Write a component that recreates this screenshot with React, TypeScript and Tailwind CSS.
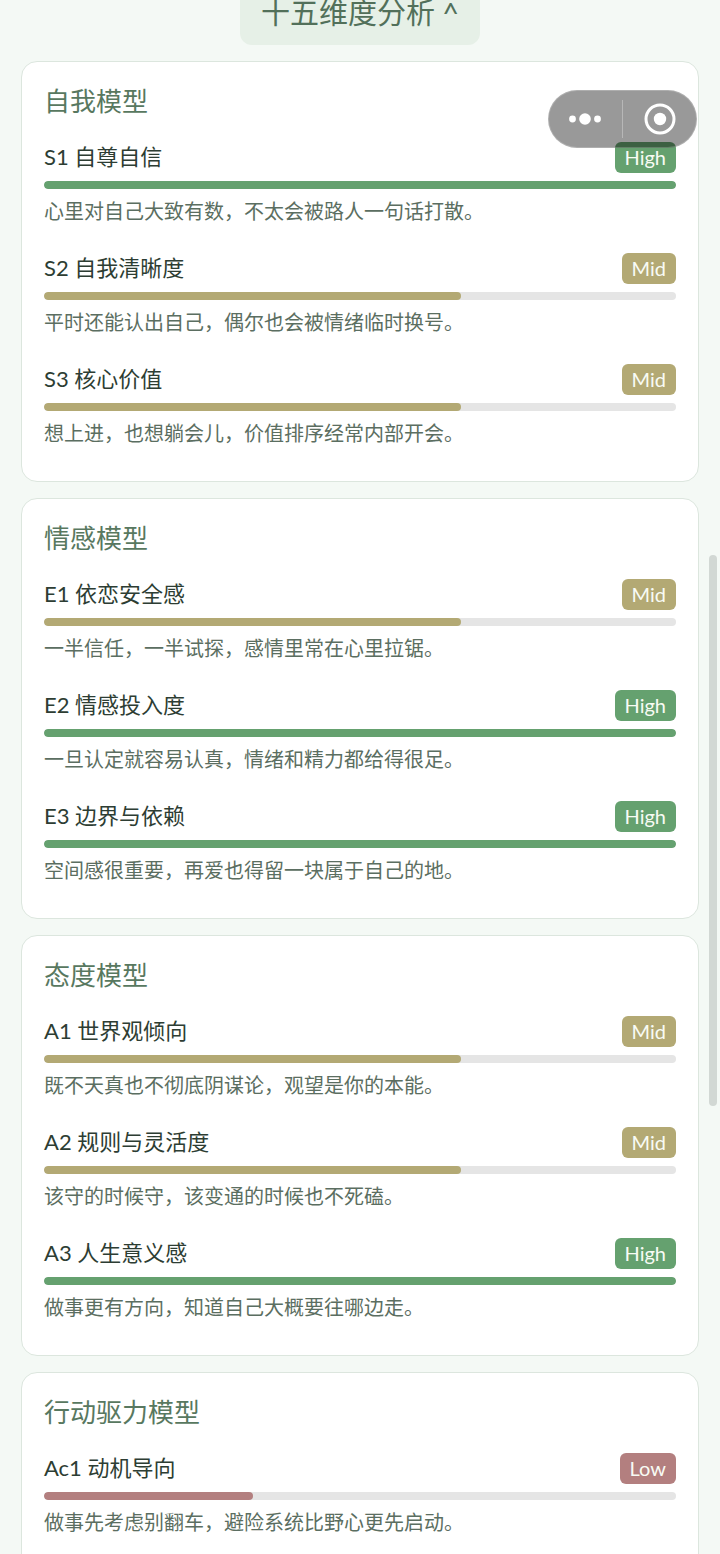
import React from "react"
import clsx from "clsx"

type Level = "High" | "Mid" | "Low"

type Dimension = {
  name: string
  level: Level
  description: string
}

type Model = {
  title: string
  dimensions: Dimension[]
}

const models: Model[] = [
  {
    title: "自我模型",
    dimensions: [
      {
        name: "S1 自尊自信",
        level: "High",
        description: "心里对自己大致有数，不太会被路人一句话打散。",
      },
      {
        name: "S2 自我清晰度",
        level: "Mid",
        description: "平时还能认出自己，偶尔也会被情绪临时换号。",
      },
      {
        name: "S3 核心价值",
        level: "Mid",
        description: "想上进，也想躺会儿，价值排序经常内部开会。",
      },
    ],
  },
  {
    title: "情感模型",
    dimensions: [
      {
        name: "E1 依恋安全感",
        level: "Mid",
        description: "一半信任，一半试探，感情里常在心里拉锯。",
      },
      {
        name: "E2 情感投入度",
        level: "High",
        description: "一旦认定就容易认真，情绪和精力都给得很足。",
      },
      {
        name: "E3 边界与依赖",
        level: "High",
        description: "空间感很重要，再爱也得留一块属于自己的地。",
      },
    ],
  },
  {
    title: "态度模型",
    dimensions: [
      {
        name: "A1 世界观倾向",
        level: "Mid",
        description: "既不天真也不彻底阴谋论，观望是你的本能。",
      },
      {
        name: "A2 规则与灵活度",
        level: "Mid",
        description: "该守的时候守，该变通的时候也不死磕。",
      },
      {
        name: "A3 人生意义感",
        level: "High",
        description: "做事更有方向，知道自己大概要往哪边走。",
      },
    ],
  },
  {
    title: "行动驱力模型",
    dimensions: [
      {
        name: "Ac1 动机导向",
        level: "Low",
        description: "做事先考虑别翻车，避险系统比野心更先启动。",
      },
    ],
  },
]

const levelStyles: Record<Level, { color: string; percent: number }> = {
  High: { color: "bg-[#65a16f]", percent: 100 },
  Mid: { color: "bg-[#b3a974]", percent: 66 },
  Low: { color: "bg-[#b37f7f]", percent: 33 },
}

function DimensionRow({ name, level, description }: Dimension) {
  const { color, percent } = levelStyles[level]

  return (
    <li>
      <div className="flex items-start justify-between">
        <h3 className="text-[22px] leading-[30px] text-[#2d3d33]">{name}</h3>
        <span
          className={clsx(
            "rounded-md px-2.5 text-[20px] leading-[31px] text-[#f8fbf4]",
            color
          )}
        >
          {level}
        </span>
      </div>
      <div
        role="progressbar"
        aria-label={name}
        aria-valuenow={percent}
        className="mt-2 h-2 overflow-hidden rounded-full bg-[#e5e5e5]"
      >
        <div
          className={clsx("h-full rounded-full", color)}
          style={{ width: `${percent}%` }}
        />
      </div>
      <p className="mt-2 text-[20px] leading-[28px] text-[#5b6e61]">
        {description}
      </p>
    </li>
  )
}

function ModelCard({ title, dimensions }: Model) {
  return (
    <section className="shrink-0 rounded-2xl border border-[#dce6de] bg-white px-[22px] pt-5 pb-[34px]">
      <h2 className="text-[26px] leading-[38px] text-[#587860]">{title}</h2>
      <ul className="mt-[22px] flex flex-col gap-7">
        {dimensions.map((dimension) => (
          <DimensionRow key={dimension.name} {...dimension} />
        ))}
      </ul>
    </section>
  )
}

// Floating menu / close control of the host app
function Capsule() {
  return (
    <div className="absolute top-[90px] right-[23px] flex h-[58px] w-[149px] items-center rounded-full border border-white/20 bg-black/40">
      <button
        type="button"
        aria-label="更多"
        className="flex h-full flex-1 items-center justify-center"
      >
        <svg width="34" height="14" viewBox="0 0 34 14" fill="#fff">
          <circle cx="3.5" cy="7" r="3.4" />
          <circle cx="16" cy="7" r="5.8" />
          <circle cx="28.5" cy="7" r="3.4" />
        </svg>
      </button>
      <div className="h-[38px] w-px bg-white/30" />
      <button
        type="button"
        aria-label="关闭"
        className="flex h-full flex-1 items-center justify-center"
      >
        <svg width="32" height="32" viewBox="0 0 32 32">
          <circle
            cx="16"
            cy="16"
            r="14"
            fill="none"
            stroke="#fff"
            strokeWidth="3"
          />
          <circle cx="16" cy="16" r="6.2" fill="#fff" />
        </svg>
      </button>
    </div>
  )
}

export default function App() {
  return (
    <div className="relative h-screen overflow-hidden bg-[#f4f9f5] font-[Lato,'Noto_Sans_CJK_SC',sans-serif]">
      {/* Section toggle, partly scrolled off */}
      <div className="flex h-[45px] items-end justify-center">
        <button
          type="button"
          aria-expanded="true"
          className="h-16 shrink-0 rounded-xl bg-[#e6f0e7] px-[21px] text-[29px] text-[#52705a]"
        >
          十五维度分析 ^
        </button>
      </div>

      <main className="mt-4 flex flex-col gap-4 px-[21px]">
        {models.map((model) => (
          <ModelCard key={model.title} {...model} />
        ))}
      </main>

      <Capsule />

      {/* Scroll position */}
      <div className="absolute top-[555px] right-[3px] h-[551px] w-2 rounded-full bg-[#d2d8d4]" />
    </div>
  )
}
